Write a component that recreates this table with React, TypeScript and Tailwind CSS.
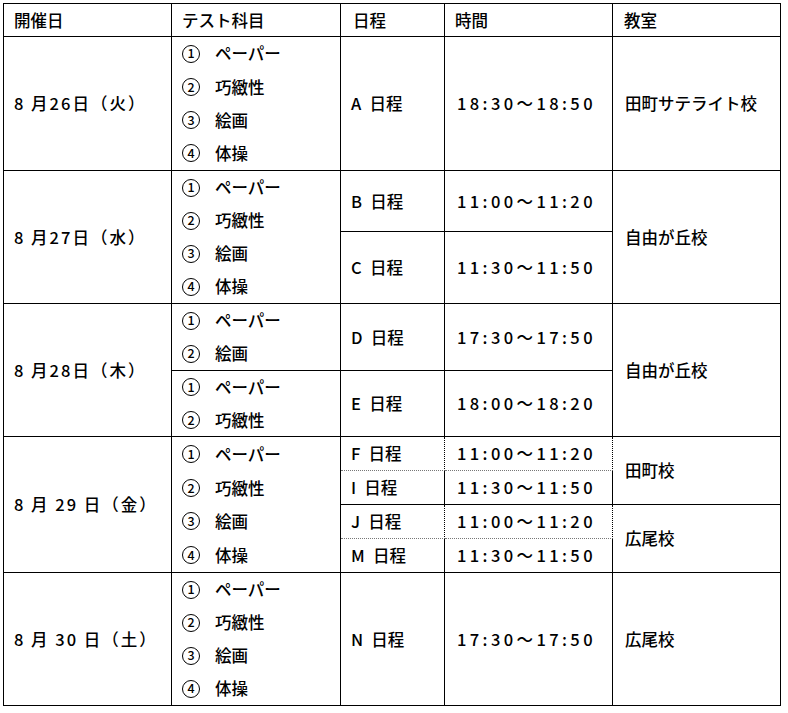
const cell = 'flex items-center border-r border-b border-black leading-none';

function Circled({ n }: { n: string }) {
  return (
    <span className="inline-flex h-[18px] w-[18px] shrink-0 items-center justify-center rounded-full border-[1.3px] border-black text-[12.5px] leading-none">
      {n}
    </span>
  );
}

function Subjects({ items, span = '' }: { items: [string, string][]; span?: string }) {
  return (
    <div className={'flex flex-col justify-center border-r border-b border-black pl-[10px] leading-none ' + span}>
      {items.map(([n, s]) => (
        <div key={n + s} className="flex h-[33.5px] items-center gap-[15px]">
          <Circled n={n} />
          <span>{s}</span>
        </div>
      ))}
    </div>
  );
}

const four: [string, string][] = [
  ['1', 'ペーパー'],
  ['2', '巧緻性'],
  ['3', '絵画'],
  ['4', '体操'],
];

function Time({ t, dotted }: { t: string; dotted?: boolean }) {
  return (
    <div
      className={
        dotted
          ? 'flex items-center border-r border-b border-dotted border-r-black border-b-[#777] pl-[12px] leading-none tracking-[3.4px]'
          : cell + ' pl-[12px] tracking-[3.4px]'
      }
    >
      {t}
    </div>
  );
}

function Sched({ s, dotted }: { s: string; dotted?: boolean }) {
  return (
    <div
      className={
        dotted
          ? 'flex items-center border-r border-b border-dotted border-r-black border-b-[#777] pl-[10px] leading-none whitespace-pre'
          : cell + ' pl-[10px] whitespace-pre'
      }
    >
      {s + '\u2002日程'}
    </div>
  );
}

export default function App() {
  return (
    <div className="min-h-screen bg-white pt-[3px] pl-[3px] font-['Noto_Sans_CJK_JP',sans-serif] text-[16.5px] font-medium text-black">
      <div className="grid w-[778px] grid-cols-[168px_169px_104px_168px_168px] grid-rows-[33px_134px_61px_72px_67px_66px_34px_34px_34px_34px_133px] border-t border-l border-black">
        {/* header */}
        <div className={cell + ' pl-[10px]'}>開催日</div>
        <div className={cell + ' pl-[10px]'}>テスト科目</div>
        <div className={cell + ' pl-[12px]'}>日程</div>
        <div className={cell + ' pl-[10px]'}>時間</div>
        <div className={cell + ' pl-[11px]'}>教室</div>

        {/* 8/26 */}
        <div className={cell + ' pl-[10px] tracking-[2px] whitespace-pre'}>8 月26日（火）</div>
        <Subjects items={four} />
        <Sched s="A" />
        <Time t="18:30～18:50" />
        <div className={cell + ' pl-[12px]'}>田町サテライト校</div>

        {/* 8/27 */}
        <div className={cell + ' row-span-2 pl-[10px] tracking-[2px] whitespace-pre'}>8 月27日（水）</div>
        <Subjects items={four} span="row-span-2" />
        <Sched s="B" />
        <Time t="11:00～11:20" />
        <div className={cell + ' row-span-2 pl-[12px]'}>自由が丘校</div>
        <Sched s="C" />
        <Time t="11:30～11:50" />

        {/* 8/28 */}
        <div className={cell + ' row-span-2 pl-[10px] tracking-[2px] whitespace-pre'}>8 月28日（木）</div>
        <Subjects items={[['1', 'ペーパー'], ['2', '絵画']]} />
        <Sched s="D" />
        <Time t="17:30～17:50" />
        <div className={cell + ' row-span-2 pl-[12px]'}>自由が丘校</div>
        <Subjects items={[['1', 'ペーパー'], ['2', '巧緻性']]} />
        <Sched s="E" />
        <Time t="18:00～18:20" />

        {/* 8/29 */}
        <div className={cell + ' row-span-4 pl-[10px] tracking-[2px] whitespace-pre'}>8 月 29 日（金）</div>
        <Subjects items={four} span="row-span-4" />
        <Sched s="F" dotted />
        <Time t="11:00～11:20" dotted />
        <div className={cell + ' row-span-2 pl-[12px]'}>田町校</div>
        <Sched s="I" />
        <Time t="11:30～11:50" />
        <Sched s="J" dotted />
        <Time t="11:00～11:20" dotted />
        <div className={cell + ' row-span-2 pl-[12px]'}>広尾校</div>
        <Sched s="M" />
        <Time t="11:30～11:50" />

        {/* 8/30 */}
        <div className={cell + ' pl-[10px] tracking-[2px] whitespace-pre'}>8 月 30 日（土）</div>
        <Subjects items={four} />
        <Sched s="N" />
        <Time t="17:30～17:50" />
        <div className={cell + ' pl-[12px]'}>広尾校</div>
      </div>
    </div>
  );
}
